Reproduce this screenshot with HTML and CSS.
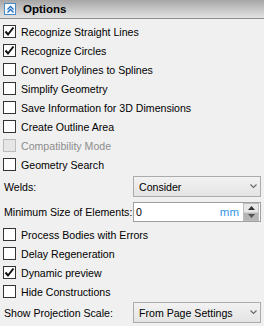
FILE: index.html
```html
<!DOCTYPE html>
<html lang="en">
<head>
	<title>Options</title>
	<meta charset="utf-8">
	<link rel="stylesheet" href="styles.css">
</head>
<body>
	<div class="panel">
		<div class="head">
			<span class="collapse">
				<svg width="9" height="9" viewBox="0 0 9 9"><path d="M1.5 4.5 L4.5 1.5 L7.5 4.5 M1.5 7.5 L4.5 4.5 L7.5 7.5" fill="none" stroke="#1d6fc4" stroke-width="1.3"/></svg>
			</span>
			<span class="title">Options</span>
		</div>

		<div class="rows">
			<div class="row"><span class="box"><svg class="tick" width="11" height="11" viewBox="0 0 11 11"><path d="M1.5 5.5 L4 8.5 L9.5 1.5" fill="none" stroke="#111" stroke-width="2"/></svg></span>Recognize Straight Lines</div>
			<div class="row"><span class="box"><svg class="tick" width="11" height="11" viewBox="0 0 11 11"><path d="M1.5 5.5 L4 8.5 L9.5 1.5" fill="none" stroke="#111" stroke-width="2"/></svg></span>Recognize Circles</div>
			<div class="row"><span class="box"></span>Convert Polylines to Splines</div>
			<div class="row"><span class="box"></span>Simplify Geometry</div>
			<div class="row"><span class="box"></span>Save Information for 3D Dimensions</div>
			<div class="row"><span class="box"></span>Create Outline Area</div>
			<div class="row off"><span class="box"></span>Compatibility Mode</div>
			<div class="row"><span class="box"></span>Geometry Search</div>
		</div>

		<div class="field welds">
			<span class="label">Welds:</span>
			<div class="select">Consider<span class="chev"><svg width="7" height="5" viewBox="0 0 7 5"><path d="M0.5 0.5 L3.5 3.5 L6.5 0.5" fill="none" stroke="#666" stroke-width="1.1"/></svg></span></div>
		</div>
		<div class="field minsize">
			<span class="label">Minimum Size of Elements:</span>
			<div class="input">
				<span class="val">0</span>
				<span class="unit">mm</span>
				<span class="spin">
					<span class="up"><svg width="7" height="4" viewBox="0 0 7 4"><path d="M0 4 L3.5 0 L7 4 Z" fill="#333"/></svg></span>
					<span class="down"><svg width="7" height="4" viewBox="0 0 7 4"><path d="M0 0 L3.5 4 L7 0 Z" fill="#555"/></svg></span>
				</span>
			</div>
		</div>

		<div class="rows second">
			<div class="row"><span class="box"></span>Process Bodies with Errors</div>
			<div class="row"><span class="box"></span>Delay Regeneration</div>
			<div class="row"><span class="box"><svg class="tick" width="11" height="11" viewBox="0 0 11 11"><path d="M1.5 5.5 L4 8.5 L9.5 1.5" fill="none" stroke="#111" stroke-width="2"/></svg></span>Dynamic preview</div>
			<div class="row"><span class="box"></span>Hide Constructions</div>
		</div>

		<div class="field scale">
			<span class="label">Show Projection Scale:</span>
			<div class="select">From Page Settings<span class="chev"><svg width="7" height="5" viewBox="0 0 7 5"><path d="M0.5 0.5 L3.5 3.5 L6.5 0.5" fill="none" stroke="#666" stroke-width="1.1"/></svg></span></div>
		</div>
	</div>
</body>
</html>
```

FILE: styles.css
```css
body {
	margin: 0;
	background-color: #F0F0F0;
	font-family: "Liberation Sans", Arial, sans-serif;
	font-size: 10.6px;
	color: #000000;
}
.panel {
	width: 264px;
}
.head {
	height: 18px;
	border-bottom: 1px solid #8C8C8C;
	background: linear-gradient(#A6A6A6, #E4E4E4);
	display: flex;
	align-items: center;
}
.collapse {
	width: 10px;
	height: 10px;
	margin-left: 4px;
	border: 1px solid #4A8BC8;
	background-color: #F6FAFE;
	display: flex;
	align-items: center;
	justify-content: center;
}
.title {
	margin-left: 7px;
	font-weight: bold;
	font-size: 11.5px;
}
.rows {
	padding-top: 3px;
}
.row {
	height: 19px;
	display: flex;
	align-items: center;
	padding-left: 3px;
	white-space: nowrap;
}
.box {
	width: 11px;
	height: 11px;
	border: 1px solid #333333;
	background-color: #FFFFFF;
	margin-right: 5px;
	display: flex;
	align-items: center;
	justify-content: center;
}
.off {
	color: #8D8D8D;
}
.off .box {
	border-color: #BCBCBC;
	background-color: #E6E6E6;
}
.field {
	display: flex;
	align-items: center;
	padding-left: 4px;
	white-space: nowrap;
}
.label {
	width: 129px;
}
.select {
	width: 121px;
	height: 19px;
	border: 1px solid #ACACAC;
	background: linear-gradient(#F2F2F2, #E4E4E4);
	padding-left: 5px;
	display: flex;
	align-items: center;
	justify-content: space-between;
}
.chev {
	width: 12px;
	display: flex;
	align-items: center;
	justify-content: center;
	margin-right: 1px;
}
.welds {
	margin-top: 2px;
}
.minsize {
	margin-top: 5px;
}
.input {
	width: 124px;
	height: 18px;
	border: 1px solid #A0A0A0;
	background-color: #FFFFFF;
	padding-left: 2px;
	display: flex;
	align-items: center;
}
.val {
	flex: 1;
}
.unit {
	color: #3398EA;
	margin-right: 4px;
	font-size: 11.5px;
}
.spin {
	width: 14px;
	height: 16px;
	display: flex;
	flex-direction: column;
	border: 1px solid #BDBDBD;
	margin-right: 1px;
}
.spin span {
	flex: 1;
	display: flex;
	align-items: center;
	justify-content: center;
}
.up {
	background-color: #E8E8E8;
	border-bottom: 1px solid #D0D0D0;
}
.down {
	background-color: #B5B5B5;
}
.second {
	padding-top: 3px;
}
.scale {
	margin-top: 1px;
}
```
